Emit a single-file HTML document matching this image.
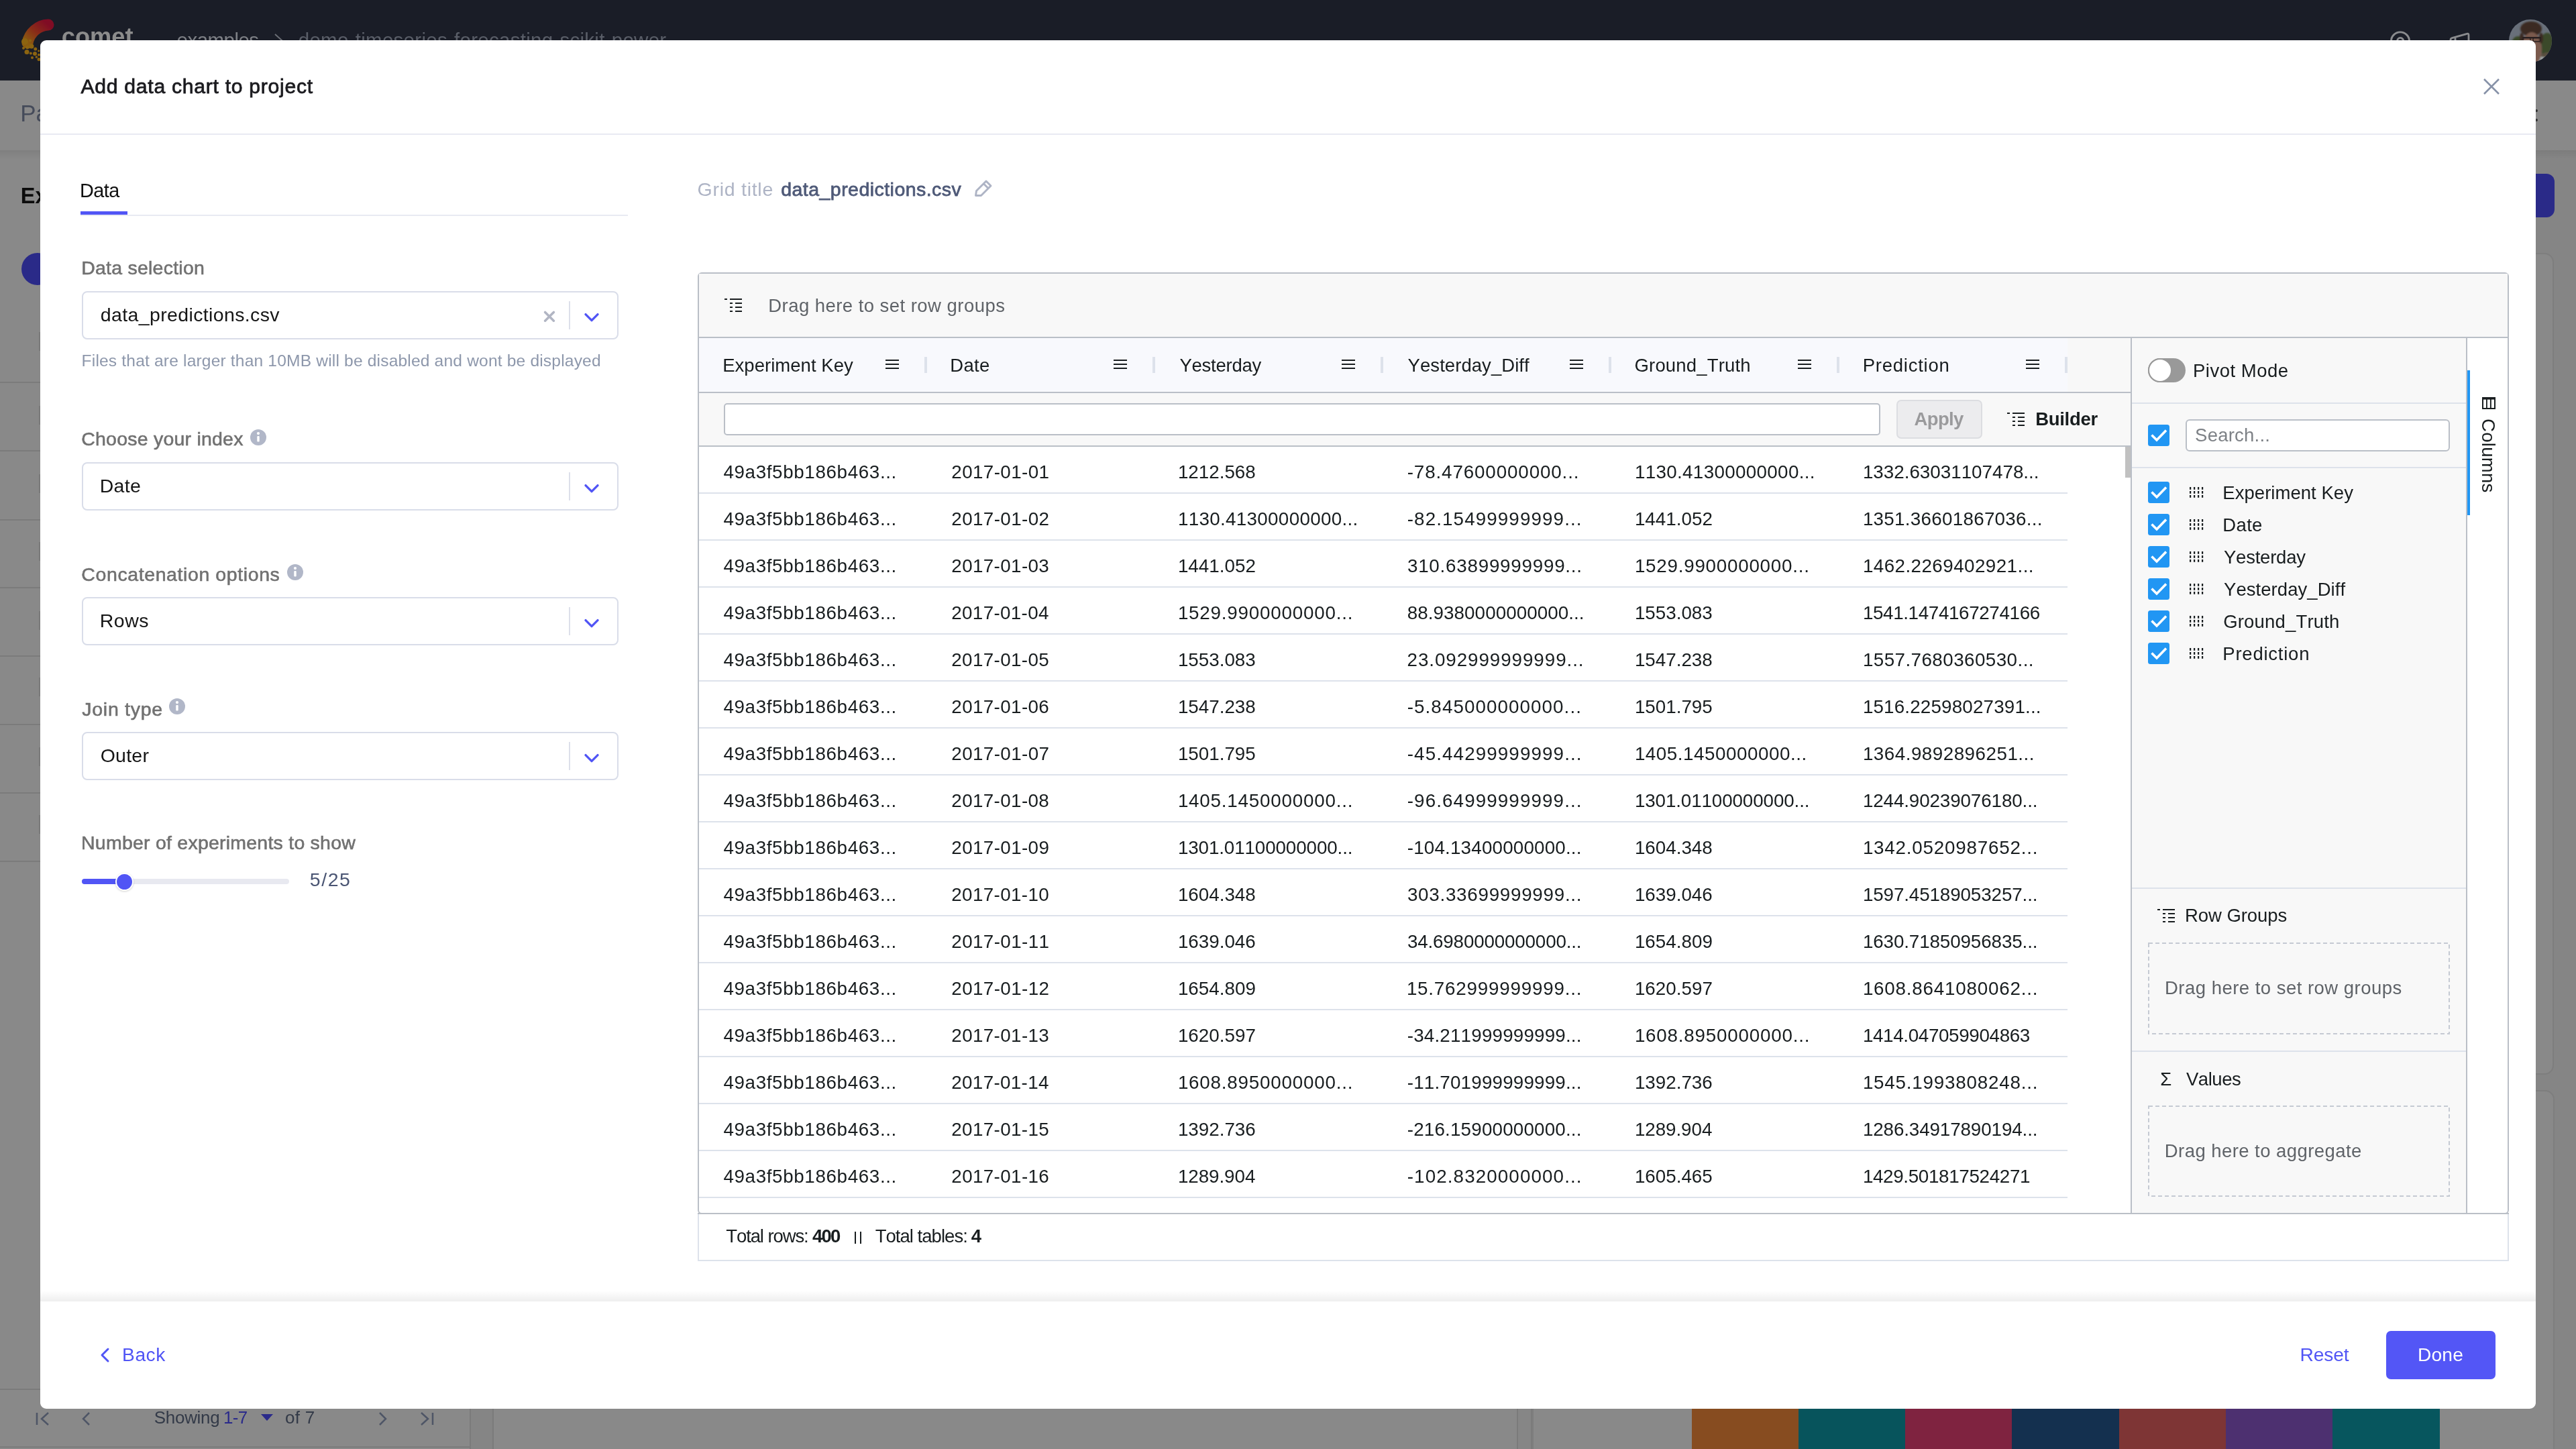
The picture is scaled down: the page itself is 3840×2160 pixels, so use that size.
<!DOCTYPE html><html><head><meta charset="utf-8"><style>
html,body{margin:0;padding:0;}body{width:3840px;height:2160px;overflow:hidden;position:relative;background:#898989;font-family:"Liberation Sans", sans-serif;font-kerning:none;}
.t{position:absolute;white-space:pre;line-height:0;}.r{position:absolute;display:block;box-sizing:border-box;}
</style></head><body><div id="w" style="position:absolute;left:0;top:0;width:3840px;height:2160px;will-change:transform;">
<div class="r" style="left:0px;top:0px;width:3840px;height:120px;background:#1a1d27"></div>
<svg class="r" style="left:0px;top:0px;" width="100" height="100" viewBox="0 0 100 100"><defs><linearGradient id="lg" x1="0" y1="1" x2="1" y2="0"><stop offset="0" stop-color="#8a5c10"/><stop offset="0.5" stop-color="#8a2c18"/><stop offset="1" stop-color="#800c24"/></linearGradient></defs><path d="M41 64 A 33 33 0 0 1 72 37" stroke="url(#lg)" stroke-width="17" fill="none" stroke-linecap="round"/><circle cx="37" cy="62" r="5" fill="#8c6410"/><circle cx="45" cy="60.5" r="2" fill="#8c6410"/><circle cx="47" cy="69" r="3.5" fill="#8c6410"/><circle cx="40.7" cy="70.6" r="2.5" fill="#8c6410"/><circle cx="35" cy="71.7" r="2" fill="#8c6410"/><circle cx="40" cy="77.6" r="3.5" fill="#8c6410"/><circle cx="52.8" cy="73" r="2.5" fill="#8c6410"/><circle cx="45.8" cy="79.5" r="2" fill="#8c6410"/><circle cx="52" cy="80" r="3" fill="#8c6410"/><circle cx="57.8" cy="75.8" r="1.6" fill="#8c6410"/><circle cx="48" cy="86" r="2" fill="#8c6410"/><circle cx="54.3" cy="85" r="1.8" fill="#8c6410"/><circle cx="58" cy="88.5" r="2.5" fill="#8c6410"/><circle cx="58" cy="81.8" r="2" fill="#8c6410"/></svg>
<div class="t" style="left:91.78px;top:55.21px;font-size:36.3px;color:#8c8c8c;font-weight:700;letter-spacing:-0.013px;">comet</div>
<div class="t" style="left:263.55px;top:59.77px;font-size:29.5px;color:#7e8086;font-weight:400;letter-spacing:-0.534px;">examples</div>
<svg class="r" style="left:408px;top:49px;" width="14" height="22" viewBox="0 0 14 22"><path d="M2 2 L12 11 L2 20" stroke="#6a6d74" stroke-width="2" fill="none"/></svg>
<div class="t" style="left:444.76px;top:59.77px;font-size:29.5px;color:#5a5e68;font-weight:400;letter-spacing:0.275px;">demo-timeseries-forecasting-scikit-power</div>
<svg class="r" style="left:3562px;top:45px;" width="34" height="34" viewBox="0 0 34 34"><circle cx="16" cy="16.5" r="13.6" stroke="#8a8b8e" stroke-width="2.9" fill="none"/><path d="M11.5 16 a4.6 4.6 0 1 1 7.5 3.6" stroke="#8a8b8e" stroke-width="2.9" fill="none" stroke-linecap="round"/></svg>
<svg class="r" style="left:3648px;top:46px;" width="40" height="34" viewBox="0 0 40 34"><path d="M5 30 V13.5 Q5 11.3 7.2 10.6 L29.5 4.3 Q32 3.6 32 6.2 V34 M12 9.5 V34" stroke="#8a8b8e" stroke-width="2.8" fill="none" stroke-linejoin="round"/></svg>
<svg class="r" style="left:3740px;top:29px;" width="64" height="64" viewBox="0 0 64 64"><defs><clipPath id="av"><circle cx="32" cy="32" r="32"/></clipPath><filter id="bl"><feGaussianBlur stdDeviation="1.2"/></filter></defs><g clip-path="url(#av)"><rect width="64" height="64" fill="#69707a"/><g filter="url(#bl)"><ellipse cx="14" cy="36" rx="10" ry="11" fill="#3b4a2c"/><ellipse cx="57" cy="38" rx="11" ry="18" fill="#3a4a2a"/><ellipse cx="58" cy="57" rx="12" ry="8" fill="#5a5040"/><path d="M28 64 L40 54 L64 58 L64 64 Z" fill="#9ea3a3"/><ellipse cx="33" cy="14" rx="16" ry="11" fill="#3a2a22"/><ellipse cx="34" cy="44" rx="15" ry="25" fill="#7a5a4e"/><ellipse cx="19" cy="28" rx="3" ry="8" fill="#3a2a22"/><ellipse cx="48" cy="28" rx="3" ry="8" fill="#3a2a22"/></g><rect x="20" y="26" width="28" height="2.5" fill="#2a2020"/><rect x="21" y="27" width="11" height="6" rx="2.5" fill="none" stroke="#2a2020" stroke-width="1.3"/><rect x="36" y="27" width="11" height="6" rx="2.5" fill="none" stroke="#2a2020" stroke-width="1.3"/></g></svg>
<div class="t" style="left:30.13px;top:168.87px;font-size:35px;color:#454b5a;font-weight:400;letter-spacing:0.000px;">Pa</div>
<div class="r" style="left:3780px;top:224px;width:60px;height:1936px;background:#858585"></div>
<div class="r" style="left:0px;top:224px;width:3840px;height:13px;background:linear-gradient(180deg,rgba(0,0,0,0.065),rgba(0,0,0,0))"></div>
<div class="t" style="left:30.83px;top:291.73px;font-size:32.5px;color:#0c0c0c;font-weight:700;letter-spacing:0.000px;">Ex</div>
<div class="r" style="left:32px;top:377px;width:48px;height:48px;border-radius:50%;background:#2a2a88"></div>
<div class="r" style="left:58px;top:495px;width:3px;height:28px;background:#7a7a7a"></div>
<div class="r" style="left:58px;top:605px;width:3px;height:28px;background:#7a7a7a"></div>
<div class="r" style="left:58px;top:707px;width:3px;height:28px;background:#7a7a7a"></div>
<div class="r" style="left:58px;top:808px;width:3px;height:28px;background:#7a7a7a"></div>
<div class="r" style="left:58px;top:911px;width:3px;height:28px;background:#7a7a7a"></div>
<div class="r" style="left:58px;top:1010px;width:3px;height:28px;background:#7a7a7a"></div>
<div class="r" style="left:58px;top:1114px;width:3px;height:28px;background:#7a7a7a"></div>
<div class="r" style="left:58px;top:1215px;width:3px;height:28px;background:#7a7a7a"></div>
<div class="r" style="left:0px;top:569px;width:60px;height:2px;background:#7b7b7b"></div>
<div class="r" style="left:0px;top:671px;width:60px;height:2px;background:#7b7b7b"></div>
<div class="r" style="left:0px;top:774px;width:60px;height:2px;background:#7b7b7b"></div>
<div class="r" style="left:0px;top:875px;width:60px;height:2px;background:#7b7b7b"></div>
<div class="r" style="left:0px;top:977px;width:60px;height:2px;background:#7b7b7b"></div>
<div class="r" style="left:0px;top:1079px;width:60px;height:2px;background:#7b7b7b"></div>
<div class="r" style="left:0px;top:1181px;width:60px;height:2px;background:#7b7b7b"></div>
<div class="r" style="left:0px;top:1283px;width:60px;height:2px;background:#7b7b7b"></div>
<div class="r" style="left:0px;top:2070px;width:700px;height:2px;background:#7b7b7b"></div>
<div class="r" style="left:3700px;top:259px;width:108px;height:65px;border-radius:12px;background:#2a2a88"></div>
<div class="r" style="left:2290px;top:377px;width:1517px;height:1225px;border-radius:14px;border:2px solid #7e7e7e;background:#898989"></div>
<div class="r" style="left:2284px;top:1625px;width:1524px;height:900px;border-radius:14px;border:2px solid #7e7e7e;background:#898989"></div>
<div class="r" style="left:3779px;top:163px;width:4px;height:4px;background:#333;border-radius:50%"></div>
<div class="r" style="left:3779px;top:177px;width:4px;height:4px;background:#333;border-radius:50%"></div>
<div class="t" style="left:229.82px;top:2112.99px;font-size:26px;color:#333a48;font-weight:400;letter-spacing:-0.313px;">Showing</div>
<div class="t" style="left:333.02px;top:2112.99px;font-size:26px;color:#2a2a8a;font-weight:400;letter-spacing:-0.645px;">1-7</div>
<svg class="r" style="left:389px;top:2108px;" width="18" height="12" viewBox="0 0 18 12"><path d="M0 0 L18 0 L9 10 Z" fill="#2a2a8a"/></svg>
<div class="t" style="left:424.91px;top:2112.99px;font-size:26px;color:#333a48;font-weight:400;letter-spacing:0.344px;">of 7</div>
<svg class="r" style="left:52px;top:2104px;" width="24" height="22" viewBox="0 0 24 22"><path d="M3 2 V20 M20 2 L10 11 L20 20" stroke="#4e5566" stroke-width="2.5" fill="none"/></svg>
<svg class="r" style="left:120px;top:2104px;" width="16" height="22" viewBox="0 0 16 22"><path d="M13 2 L4 11 L13 20" stroke="#4e5566" stroke-width="2.5" fill="none"/></svg>
<svg class="r" style="left:563px;top:2104px;" width="16" height="22" viewBox="0 0 16 22"><path d="M3 2 L12 11 L3 20" stroke="#4e5566" stroke-width="2.5" fill="none"/></svg>
<svg class="r" style="left:624px;top:2104px;" width="24" height="22" viewBox="0 0 24 22"><path d="M4 2 L14 11 L4 20 M21 2 V20" stroke="#4e5566" stroke-width="2.5" fill="none"/></svg>
<div class="r" style="left:700px;top:2100px;width:36px;height:60px;background:#858585"></div>
<div class="r" style="left:700px;top:2100px;width:2px;height:60px;background:#7b7b7b"></div>
<div class="r" style="left:734px;top:2100px;width:2px;height:60px;background:#7b7b7b"></div>
<div class="r" style="left:0px;top:2156px;width:700px;height:2px;background:#7b7b7b"></div>
<div class="r" style="left:2261px;top:2100px;width:23px;height:60px;background:#868686"></div>
<div class="r" style="left:2261px;top:2100px;width:2px;height:60px;background:#7b7b7b"></div>
<div class="r" style="left:2282px;top:2100px;width:2px;height:60px;background:#7b7b7b"></div>
<div class="r" style="left:2522px;top:2100px;width:160px;height:60px;background:#874c20"></div>
<div class="r" style="left:2681px;top:2100px;width:160px;height:60px;background:#07545c"></div>
<div class="r" style="left:2840px;top:2100px;width:160px;height:60px;background:#7f2340"></div>
<div class="r" style="left:2999px;top:2100px;width:160px;height:60px;background:#14304f"></div>
<div class="r" style="left:3159px;top:2100px;width:160px;height:60px;background:#7e3535"></div>
<div class="r" style="left:3318px;top:2100px;width:160px;height:60px;background:#4d3070"></div>
<div class="r" style="left:3477px;top:2100px;width:160px;height:60px;background:#07565e"></div>
<div class="r" style="left:60px;top:60px;width:3720px;height:2040px;background:#ffffff;border-radius:9px"></div>
<div class="t" style="left:120.44px;top:129.03px;font-size:30.2px;color:#1b1b1f;font-weight:400;letter-spacing:0.697px;-webkit-text-stroke:0.8px #1b1b1f;">Add data chart to project</div>
<svg class="r" style="left:3700px;top:115px;" width="28" height="28" viewBox="0 0 28 28"><path d="M3 3 L25 25 M25 3 L3 25" stroke="#8792a8" stroke-width="2.6" fill="none"/></svg>
<div class="r" style="left:60px;top:199px;width:3720px;height:2px;background:#e8eaf2"></div>
<div class="t" style="left:119.04px;top:284.42px;font-size:28.8px;color:#111111;font-weight:400;letter-spacing:-0.491px;">Data</div>
<div class="r" style="left:120px;top:320px;width:816px;height:2px;background:#e8eaf2"></div>
<div class="r" style="left:120px;top:315px;width:70px;height:5px;background:#5155f5"></div>
<div class="t" style="left:121.16px;top:399.32px;font-size:28.5px;color:#717171;font-weight:400;letter-spacing:0.237px;-webkit-text-stroke:0.6px #717171;">Data selection</div>
<div class="r" style="left:122px;top:434px;width:800px;height:72px;border:2px solid #d9dde9;border-radius:8px;background:#fff"></div>
<div class="t" style="left:149.80px;top:469.32px;font-size:28.5px;color:#151515;font-weight:400;letter-spacing:0.367px;">data_predictions.csv</div>
<div class="r" style="left:848px;top:449px;width:2px;height:42px;background:#dde0ea"></div>
<svg class="r" style="left:868px;top:463px;" width="28" height="18" viewBox="0 0 28 18"><path d="M5 5.6 L14 14.6 L23 5.6" stroke="#5155f5" stroke-width="3.4" fill="none" stroke-linecap="round" stroke-linejoin="round"/></svg>
<svg class="r" style="left:806px;top:459px;" width="26" height="26" viewBox="0 0 26 26"><path d="M6.6 6.4 L19.4 19.2 M19.4 6.4 L6.6 19.2" stroke="#b1b5c3" stroke-width="3.5" fill="none" stroke-linecap="round"/></svg>
<div class="t" style="left:121.58px;top:538.47px;font-size:24.6px;color:#8d97ab;font-weight:400;letter-spacing:0.162px;">Files that are larger than 10MB will be disabled and wont be displayed</div>
<div class="t" style="left:121.25px;top:654.12px;font-size:28.5px;color:#717171;font-weight:400;letter-spacing:0.219px;-webkit-text-stroke:0.6px #717171;">Choose your index</div>
<svg class="r" style="left:373px;top:640px;" width="24" height="24" viewBox="0 0 24 24"><circle cx="12" cy="12" r="12" fill="#b1b7c8"/><circle cx="12" cy="6.1" r="2.1" fill="#fff"/><rect x="10.3" y="10" width="3.4" height="8.5" rx="1.2" fill="#fff"/></svg>
<div class="r" style="left:122px;top:689px;width:800px;height:72px;border:2px solid #d9dde9;border-radius:8px;background:#fff"></div>
<div class="t" style="left:148.66px;top:724.32px;font-size:28.5px;color:#151515;font-weight:400;letter-spacing:0.301px;">Date</div>
<div class="r" style="left:848px;top:704px;width:2px;height:42px;background:#dde0ea"></div>
<svg class="r" style="left:868px;top:718px;" width="28" height="18" viewBox="0 0 28 18"><path d="M5 5.6 L14 14.6 L23 5.6" stroke="#5155f5" stroke-width="3.4" fill="none" stroke-linecap="round" stroke-linejoin="round"/></svg>
<div class="t" style="left:121.35px;top:856.42px;font-size:28.5px;color:#717171;font-weight:400;letter-spacing:0.593px;-webkit-text-stroke:0.6px #717171;">Concatenation options</div>
<svg class="r" style="left:428px;top:841px;" width="24" height="24" viewBox="0 0 24 24"><circle cx="12" cy="12" r="12" fill="#b1b7c8"/><circle cx="12" cy="6.1" r="2.1" fill="#fff"/><rect x="10.3" y="10" width="3.4" height="8.5" rx="1.2" fill="#fff"/></svg>
<div class="r" style="left:122px;top:890px;width:800px;height:72px;border:2px solid #d9dde9;border-radius:8px;background:#fff"></div>
<div class="t" style="left:148.66px;top:925.32px;font-size:28.5px;color:#151515;font-weight:400;letter-spacing:0.535px;">Rows</div>
<div class="r" style="left:848px;top:905px;width:2px;height:42px;background:#dde0ea"></div>
<svg class="r" style="left:868px;top:919px;" width="28" height="18" viewBox="0 0 28 18"><path d="M5 5.6 L14 14.6 L23 5.6" stroke="#5155f5" stroke-width="3.4" fill="none" stroke-linecap="round" stroke-linejoin="round"/></svg>
<div class="t" style="left:122.35px;top:1057.12px;font-size:28.5px;color:#717171;font-weight:400;letter-spacing:0.705px;-webkit-text-stroke:0.6px #717171;">Join type</div>
<svg class="r" style="left:252px;top:1041px;" width="24" height="24" viewBox="0 0 24 24"><circle cx="12" cy="12" r="12" fill="#b1b7c8"/><circle cx="12" cy="6.1" r="2.1" fill="#fff"/><rect x="10.3" y="10" width="3.4" height="8.5" rx="1.2" fill="#fff"/></svg>
<div class="r" style="left:122px;top:1091px;width:800px;height:72px;border:2px solid #d9dde9;border-radius:8px;background:#fff"></div>
<div class="t" style="left:149.65px;top:1126.32px;font-size:28.5px;color:#151515;font-weight:400;letter-spacing:0.261px;">Outer</div>
<div class="r" style="left:848px;top:1106px;width:2px;height:42px;background:#dde0ea"></div>
<svg class="r" style="left:868px;top:1120px;" width="28" height="18" viewBox="0 0 28 18"><path d="M5 5.6 L14 14.6 L23 5.6" stroke="#5155f5" stroke-width="3.4" fill="none" stroke-linecap="round" stroke-linejoin="round"/></svg>
<div class="t" style="left:121.06px;top:1256.12px;font-size:28.5px;color:#717171;font-weight:400;letter-spacing:0.230px;-webkit-text-stroke:0.6px #717171;">Number of experiments to show</div>
<div class="r" style="left:122px;top:1310px;width:309px;height:8px;background:#e8e9f0;border-radius:4px"></div>
<div class="r" style="left:122px;top:1310px;width:64px;height:8px;background:#5155f5;border-radius:4px"></div>
<div class="r" style="left:172px;top:1301px;width:27px;height:27px;border-radius:50%;background:#5155f5;border:2px solid #fff;box-shadow:0 1px 3px rgba(0,0,0,0.18)"></div>
<div class="t" style="left:461.86px;top:1311.12px;font-size:28.5px;color:#4a5573;font-weight:400;letter-spacing:1.523px;">5/25</div>
<div class="t" style="left:1039.57px;top:281.72px;font-size:28.5px;color:#aeb4c5;font-weight:400;letter-spacing:0.732px;">Grid title</div>
<div class="t" style="left:1164.20px;top:281.72px;font-size:28.5px;color:#4f5a78;font-weight:400;letter-spacing:0.462px;-webkit-text-stroke:0.8px #4f5a78;">data_predictions.csv</div>
<svg class="r" style="left:1450px;top:266px;" width="32" height="32" viewBox="0 0 32 32"><path d="M4.5 25.5 L5.5 18.5 L20 4 L27 11 L12.5 25.5 Z M16.2 7.8 L23.2 14.8" stroke="#aeb4c5" stroke-width="2.9" fill="none" stroke-linejoin="round"/></svg>
<div class="r" style="left:1040px;top:406px;width:2700px;height:1404px;border:2px solid #babfc7;border-radius:6px;background:#fff;overflow:hidden"></div>
<div class="r" style="left:1042px;top:408px;width:2696px;height:94px;background:#f8f8f8"></div>
<div class="r" style="left:1042px;top:502px;width:2696px;height:2px;background:#babfc7"></div>
<svg class="r" style="left:1078px;top:443px;" width="30" height="24" viewBox="0 0 30 24"><rect x="2" y="2" width="4" height="2" fill="#181d1f"/><rect x="10" y="2" width="18" height="2" fill="#181d1f"/><rect x="10" y="8" width="4" height="2" fill="#181d1f"/><rect x="18" y="8" width="10" height="2" fill="#181d1f"/><rect x="10" y="14" width="4" height="2" fill="#181d1f"/><rect x="18" y="14" width="10" height="2" fill="#181d1f"/><rect x="10" y="20" width="4" height="2" fill="#181d1f"/><rect x="18" y="20" width="10" height="2" fill="#181d1f"/></svg>
<div class="t" style="left:1145.24px;top:455.67px;font-size:27.5px;color:#5f6368;font-weight:400;letter-spacing:0.453px;">Drag here to set row groups</div>
<div class="r" style="left:1042px;top:504px;width:2040px;height:80px;background:#f8f9fd"></div>
<div class="r" style="left:3082px;top:504px;width:94px;height:80px;background:#f8f8f8"></div>
<div class="r" style="left:1042px;top:584px;width:2134px;height:2px;background:#babfc7"></div>
<div class="t" style="left:1077.14px;top:544.67px;font-size:27.5px;color:#181d1f;font-weight:400;letter-spacing:0.038px;">Experiment Key</div>
<div class="r" style="left:1320px;top:536px;width:20px;height:2px;background:#181d1f"></div>
<div class="r" style="left:1320px;top:542px;width:20px;height:2px;background:#181d1f"></div>
<div class="r" style="left:1320px;top:548px;width:20px;height:2px;background:#181d1f"></div>
<div class="r" style="left:1378px;top:532px;width:4px;height:24px;background:#dde2eb"></div>
<div class="t" style="left:1416.24px;top:544.67px;font-size:27.5px;color:#181d1f;font-weight:400;letter-spacing:0.330px;">Date</div>
<div class="r" style="left:1660px;top:536px;width:20px;height:2px;background:#181d1f"></div>
<div class="r" style="left:1660px;top:542px;width:20px;height:2px;background:#181d1f"></div>
<div class="r" style="left:1660px;top:548px;width:20px;height:2px;background:#181d1f"></div>
<div class="r" style="left:1718px;top:532px;width:4px;height:24px;background:#dde2eb"></div>
<div class="t" style="left:1758.40px;top:544.67px;font-size:27.5px;color:#181d1f;font-weight:400;letter-spacing:-0.232px;">Yesterday</div>
<div class="r" style="left:2000px;top:536px;width:20px;height:2px;background:#181d1f"></div>
<div class="r" style="left:2000px;top:542px;width:20px;height:2px;background:#181d1f"></div>
<div class="r" style="left:2000px;top:548px;width:20px;height:2px;background:#181d1f"></div>
<div class="r" style="left:2058px;top:532px;width:4px;height:24px;background:#dde2eb"></div>
<div class="t" style="left:2098.60px;top:544.67px;font-size:27.5px;color:#181d1f;font-weight:400;letter-spacing:0.054px;">Yesterday_Diff</div>
<div class="r" style="left:2340px;top:536px;width:20px;height:2px;background:#181d1f"></div>
<div class="r" style="left:2340px;top:542px;width:20px;height:2px;background:#181d1f"></div>
<div class="r" style="left:2340px;top:548px;width:20px;height:2px;background:#181d1f"></div>
<div class="r" style="left:2398px;top:532px;width:4px;height:24px;background:#dde2eb"></div>
<div class="t" style="left:2436.52px;top:544.67px;font-size:27.5px;color:#181d1f;font-weight:400;letter-spacing:0.170px;">Ground_Truth</div>
<div class="r" style="left:2680px;top:536px;width:20px;height:2px;background:#181d1f"></div>
<div class="r" style="left:2680px;top:542px;width:20px;height:2px;background:#181d1f"></div>
<div class="r" style="left:2680px;top:548px;width:20px;height:2px;background:#181d1f"></div>
<div class="r" style="left:2738px;top:532px;width:4px;height:24px;background:#dde2eb"></div>
<div class="t" style="left:2776.64px;top:544.67px;font-size:27.5px;color:#181d1f;font-weight:400;letter-spacing:0.762px;">Prediction</div>
<div class="r" style="left:3020px;top:536px;width:20px;height:2px;background:#181d1f"></div>
<div class="r" style="left:3020px;top:542px;width:20px;height:2px;background:#181d1f"></div>
<div class="r" style="left:3020px;top:548px;width:20px;height:2px;background:#181d1f"></div>
<div class="r" style="left:3078px;top:532px;width:4px;height:24px;background:#dde2eb"></div>
<div class="r" style="left:1042px;top:586px;width:2134px;height:78px;background:#f8f8f8"></div>
<div class="r" style="left:1042px;top:664px;width:2134px;height:2px;background:#babfc7"></div>
<div class="r" style="left:1079px;top:601px;width:1724px;height:48px;border:2px solid #babfc7;border-radius:5px;background:#fff"></div>
<div class="r" style="left:2827px;top:596px;width:128px;height:58px;border:2px solid #dcdde1;border-radius:7px;background:#ececee"></div>
<div class="t" style="left:2853.52px;top:625.47px;font-size:27.5px;color:#9a9a9c;font-weight:700;letter-spacing:-0.639px;">Apply</div>
<svg class="r" style="left:2990px;top:613px;" width="30" height="24" viewBox="0 0 30 24"><rect x="2" y="2" width="4" height="2" fill="#181d1f"/><rect x="10" y="2" width="18" height="2" fill="#181d1f"/><rect x="10" y="8" width="4" height="2" fill="#181d1f"/><rect x="18" y="8" width="10" height="2" fill="#181d1f"/><rect x="10" y="14" width="4" height="2" fill="#181d1f"/><rect x="18" y="14" width="10" height="2" fill="#181d1f"/><rect x="10" y="20" width="4" height="2" fill="#181d1f"/><rect x="18" y="20" width="10" height="2" fill="#181d1f"/></svg>
<div class="t" style="left:3034.16px;top:625.47px;font-size:27.5px;color:#181d1f;font-weight:700;letter-spacing:-0.279px;">Builder</div>
<div class="t" style="left:1078.46px;top:703.66px;font-size:27.8px;color:#181d1f;font-weight:400;letter-spacing:0.619px;">49a3f5bb186b463...</div>
<div class="t" style="left:1418.30px;top:703.66px;font-size:27.8px;color:#181d1f;font-weight:400;letter-spacing:0.395px;">2017-01-01</div>
<div class="t" style="left:1755.88px;top:703.66px;font-size:27.8px;color:#181d1f;font-weight:400;letter-spacing:-0.004px;">1212.568</div>
<div class="t" style="left:2097.76px;top:703.66px;font-size:27.8px;color:#181d1f;font-weight:400;letter-spacing:0.860px;">-78.47600000000...</div>
<div class="t" style="left:2436.88px;top:703.66px;font-size:27.8px;color:#181d1f;font-weight:400;letter-spacing:0.325px;">1130.41300000000...</div>
<div class="t" style="left:2776.88px;top:703.66px;font-size:27.8px;color:#181d1f;font-weight:400;letter-spacing:-0.009px;">1332.63031107478...</div>
<div class="r" style="left:1042px;top:734px;width:2040px;height:2px;background:#dde2eb"></div>
<div class="t" style="left:1078.46px;top:773.66px;font-size:27.8px;color:#181d1f;font-weight:400;letter-spacing:0.619px;">49a3f5bb186b463...</div>
<div class="t" style="left:1418.30px;top:773.66px;font-size:27.8px;color:#181d1f;font-weight:400;letter-spacing:0.390px;">2017-01-02</div>
<div class="t" style="left:1755.88px;top:773.66px;font-size:27.8px;color:#181d1f;font-weight:400;letter-spacing:0.314px;">1130.41300000000...</div>
<div class="t" style="left:2097.76px;top:773.66px;font-size:27.8px;color:#181d1f;font-weight:400;letter-spacing:1.096px;">-82.15499999999...</div>
<div class="t" style="left:2436.88px;top:773.66px;font-size:27.8px;color:#181d1f;font-weight:400;letter-spacing:0.021px;">1441.052</div>
<div class="t" style="left:2776.88px;top:773.66px;font-size:27.8px;color:#181d1f;font-weight:400;letter-spacing:0.269px;">1351.36601867036...</div>
<div class="r" style="left:1042px;top:804px;width:2040px;height:2px;background:#dde2eb"></div>
<div class="t" style="left:1078.46px;top:843.66px;font-size:27.8px;color:#181d1f;font-weight:400;letter-spacing:0.619px;">49a3f5bb186b463...</div>
<div class="t" style="left:1418.30px;top:843.66px;font-size:27.8px;color:#181d1f;font-weight:400;letter-spacing:0.371px;">2017-01-03</div>
<div class="t" style="left:1755.88px;top:843.66px;font-size:27.8px;color:#181d1f;font-weight:400;letter-spacing:0.021px;">1441.052</div>
<div class="t" style="left:2097.94px;top:843.66px;font-size:27.8px;color:#181d1f;font-weight:400;letter-spacing:0.750px;">310.63899999999...</div>
<div class="t" style="left:2436.88px;top:843.66px;font-size:27.8px;color:#181d1f;font-weight:400;letter-spacing:0.747px;">1529.9900000000...</div>
<div class="t" style="left:2776.88px;top:843.66px;font-size:27.8px;color:#181d1f;font-weight:400;letter-spacing:0.430px;">1462.2269402921...</div>
<div class="r" style="left:1042px;top:874px;width:2040px;height:2px;background:#dde2eb"></div>
<div class="t" style="left:1078.46px;top:913.66px;font-size:27.8px;color:#181d1f;font-weight:400;letter-spacing:0.619px;">49a3f5bb186b463...</div>
<div class="t" style="left:1418.30px;top:913.66px;font-size:27.8px;color:#181d1f;font-weight:400;letter-spacing:0.325px;">2017-01-04</div>
<div class="t" style="left:1755.88px;top:913.66px;font-size:27.8px;color:#181d1f;font-weight:400;letter-spacing:0.783px;">1529.9900000000...</div>
<div class="t" style="left:2097.79px;top:913.66px;font-size:27.8px;color:#181d1f;font-weight:400;letter-spacing:0.052px;">88.9380000000000...</div>
<div class="t" style="left:2436.88px;top:913.66px;font-size:27.8px;color:#181d1f;font-weight:400;letter-spacing:-0.005px;">1553.083</div>
<div class="t" style="left:2776.88px;top:913.66px;font-size:27.8px;color:#181d1f;font-weight:400;letter-spacing:-0.366px;">1541.1474167274166</div>
<div class="r" style="left:1042px;top:944px;width:2040px;height:2px;background:#dde2eb"></div>
<div class="t" style="left:1078.46px;top:983.66px;font-size:27.8px;color:#181d1f;font-weight:400;letter-spacing:0.619px;">49a3f5bb186b463...</div>
<div class="t" style="left:1418.30px;top:983.66px;font-size:27.8px;color:#181d1f;font-weight:400;letter-spacing:0.365px;">2017-01-05</div>
<div class="t" style="left:1755.88px;top:983.66px;font-size:27.8px;color:#181d1f;font-weight:400;letter-spacing:-0.005px;">1553.083</div>
<div class="t" style="left:2097.60px;top:983.66px;font-size:27.8px;color:#181d1f;font-weight:400;letter-spacing:0.917px;">23.092999999999...</div>
<div class="t" style="left:2436.88px;top:983.66px;font-size:27.8px;color:#181d1f;font-weight:400;letter-spacing:-0.006px;">1547.238</div>
<div class="t" style="left:2776.88px;top:983.66px;font-size:27.8px;color:#181d1f;font-weight:400;letter-spacing:0.430px;">1557.7680360530...</div>
<div class="r" style="left:1042px;top:1014px;width:2040px;height:2px;background:#dde2eb"></div>
<div class="t" style="left:1078.46px;top:1053.66px;font-size:27.8px;color:#181d1f;font-weight:400;letter-spacing:0.619px;">49a3f5bb186b463...</div>
<div class="t" style="left:1418.30px;top:1053.66px;font-size:27.8px;color:#181d1f;font-weight:400;letter-spacing:0.371px;">2017-01-06</div>
<div class="t" style="left:1755.88px;top:1053.66px;font-size:27.8px;color:#181d1f;font-weight:400;letter-spacing:-0.006px;">1547.238</div>
<div class="t" style="left:2097.76px;top:1053.66px;font-size:27.8px;color:#181d1f;font-weight:400;letter-spacing:1.060px;">-5.845000000000...</div>
<div class="t" style="left:2436.88px;top:1053.66px;font-size:27.8px;color:#181d1f;font-weight:400;letter-spacing:-0.012px;">1501.795</div>
<div class="t" style="left:2776.88px;top:1053.66px;font-size:27.8px;color:#181d1f;font-weight:400;letter-spacing:0.158px;">1516.22598027391...</div>
<div class="r" style="left:1042px;top:1084px;width:2040px;height:2px;background:#dde2eb"></div>
<div class="t" style="left:1078.46px;top:1123.66px;font-size:27.8px;color:#181d1f;font-weight:400;letter-spacing:0.619px;">49a3f5bb186b463...</div>
<div class="t" style="left:1418.30px;top:1123.66px;font-size:27.8px;color:#181d1f;font-weight:400;letter-spacing:0.390px;">2017-01-07</div>
<div class="t" style="left:1755.88px;top:1123.66px;font-size:27.8px;color:#181d1f;font-weight:400;letter-spacing:-0.012px;">1501.795</div>
<div class="t" style="left:2097.76px;top:1123.66px;font-size:27.8px;color:#181d1f;font-weight:400;letter-spacing:1.096px;">-45.44299999999...</div>
<div class="t" style="left:2436.88px;top:1123.66px;font-size:27.8px;color:#181d1f;font-weight:400;letter-spacing:0.524px;">1405.1450000000...</div>
<div class="t" style="left:2776.88px;top:1123.66px;font-size:27.8px;color:#181d1f;font-weight:400;letter-spacing:0.489px;">1364.9892896251...</div>
<div class="r" style="left:1042px;top:1154px;width:2040px;height:2px;background:#dde2eb"></div>
<div class="t" style="left:1078.46px;top:1193.66px;font-size:27.8px;color:#181d1f;font-weight:400;letter-spacing:0.619px;">49a3f5bb186b463...</div>
<div class="t" style="left:1418.30px;top:1193.66px;font-size:27.8px;color:#181d1f;font-weight:400;letter-spacing:0.369px;">2017-01-08</div>
<div class="t" style="left:1755.88px;top:1193.66px;font-size:27.8px;color:#181d1f;font-weight:400;letter-spacing:0.783px;">1405.1450000000...</div>
<div class="t" style="left:2097.76px;top:1193.66px;font-size:27.8px;color:#181d1f;font-weight:400;letter-spacing:1.096px;">-96.64999999999...</div>
<div class="t" style="left:2436.88px;top:1193.66px;font-size:27.8px;color:#181d1f;font-weight:400;letter-spacing:-0.120px;">1301.01100000000...</div>
<div class="t" style="left:2776.88px;top:1193.66px;font-size:27.8px;color:#181d1f;font-weight:400;letter-spacing:-0.120px;">1244.90239076180...</div>
<div class="r" style="left:1042px;top:1224px;width:2040px;height:2px;background:#dde2eb"></div>
<div class="t" style="left:1078.46px;top:1263.66px;font-size:27.8px;color:#181d1f;font-weight:400;letter-spacing:0.619px;">49a3f5bb186b463...</div>
<div class="t" style="left:1418.30px;top:1263.66px;font-size:27.8px;color:#181d1f;font-weight:400;letter-spacing:0.381px;">2017-01-09</div>
<div class="t" style="left:1755.88px;top:1263.66px;font-size:27.8px;color:#181d1f;font-weight:400;letter-spacing:-0.120px;">1301.01100000000...</div>
<div class="t" style="left:2097.76px;top:1263.66px;font-size:27.8px;color:#181d1f;font-weight:400;letter-spacing:0.176px;">-104.13400000000...</div>
<div class="t" style="left:2436.88px;top:1263.66px;font-size:27.8px;color:#181d1f;font-weight:400;letter-spacing:-0.006px;">1604.348</div>
<div class="t" style="left:2776.88px;top:1263.66px;font-size:27.8px;color:#181d1f;font-weight:400;letter-spacing:0.783px;">1342.0520987652...</div>
<div class="r" style="left:1042px;top:1294px;width:2040px;height:2px;background:#dde2eb"></div>
<div class="t" style="left:1078.46px;top:1333.66px;font-size:27.8px;color:#181d1f;font-weight:400;letter-spacing:0.619px;">49a3f5bb186b463...</div>
<div class="t" style="left:1418.30px;top:1333.66px;font-size:27.8px;color:#181d1f;font-weight:400;letter-spacing:0.356px;">2017-01-10</div>
<div class="t" style="left:1755.88px;top:1333.66px;font-size:27.8px;color:#181d1f;font-weight:400;letter-spacing:-0.006px;">1604.348</div>
<div class="t" style="left:2097.94px;top:1333.66px;font-size:27.8px;color:#181d1f;font-weight:400;letter-spacing:0.720px;">303.33699999999...</div>
<div class="t" style="left:2436.88px;top:1333.66px;font-size:27.8px;color:#181d1f;font-weight:400;letter-spacing:-0.005px;">1639.046</div>
<div class="t" style="left:2776.88px;top:1333.66px;font-size:27.8px;color:#181d1f;font-weight:400;letter-spacing:-0.120px;">1597.45189053257...</div>
<div class="r" style="left:1042px;top:1364px;width:2040px;height:2px;background:#dde2eb"></div>
<div class="t" style="left:1078.46px;top:1403.66px;font-size:27.8px;color:#181d1f;font-weight:400;letter-spacing:0.619px;">49a3f5bb186b463...</div>
<div class="t" style="left:1418.30px;top:1403.66px;font-size:27.8px;color:#181d1f;font-weight:400;letter-spacing:0.386px;">2017-01-11</div>
<div class="t" style="left:1755.88px;top:1403.66px;font-size:27.8px;color:#181d1f;font-weight:400;letter-spacing:-0.005px;">1639.046</div>
<div class="t" style="left:2097.94px;top:1403.66px;font-size:27.8px;color:#181d1f;font-weight:400;letter-spacing:-0.179px;">34.6980000000000...</div>
<div class="t" style="left:2436.88px;top:1403.66px;font-size:27.8px;color:#181d1f;font-weight:400;letter-spacing:0.009px;">1654.809</div>
<div class="t" style="left:2776.88px;top:1403.66px;font-size:27.8px;color:#181d1f;font-weight:400;letter-spacing:-0.120px;">1630.71850956835...</div>
<div class="r" style="left:1042px;top:1434px;width:2040px;height:2px;background:#dde2eb"></div>
<div class="t" style="left:1078.46px;top:1473.66px;font-size:27.8px;color:#181d1f;font-weight:400;letter-spacing:0.619px;">49a3f5bb186b463...</div>
<div class="t" style="left:1418.30px;top:1473.66px;font-size:27.8px;color:#181d1f;font-weight:400;letter-spacing:0.390px;">2017-01-12</div>
<div class="t" style="left:1755.88px;top:1473.66px;font-size:27.8px;color:#181d1f;font-weight:400;letter-spacing:0.009px;">1654.809</div>
<div class="t" style="left:2096.88px;top:1473.66px;font-size:27.8px;color:#181d1f;font-weight:400;letter-spacing:0.783px;">15.762999999999...</div>
<div class="t" style="left:2436.88px;top:1473.66px;font-size:27.8px;color:#181d1f;font-weight:400;letter-spacing:0.021px;">1620.597</div>
<div class="t" style="left:2776.88px;top:1473.66px;font-size:27.8px;color:#181d1f;font-weight:400;letter-spacing:0.783px;">1608.8641080062...</div>
<div class="r" style="left:1042px;top:1504px;width:2040px;height:2px;background:#dde2eb"></div>
<div class="t" style="left:1078.46px;top:1543.66px;font-size:27.8px;color:#181d1f;font-weight:400;letter-spacing:0.619px;">49a3f5bb186b463...</div>
<div class="t" style="left:1418.30px;top:1543.66px;font-size:27.8px;color:#181d1f;font-weight:400;letter-spacing:0.371px;">2017-01-13</div>
<div class="t" style="left:1755.88px;top:1543.66px;font-size:27.8px;color:#181d1f;font-weight:400;letter-spacing:0.021px;">1620.597</div>
<div class="t" style="left:2097.76px;top:1543.66px;font-size:27.8px;color:#181d1f;font-weight:400;letter-spacing:0.176px;">-34.211999999999...</div>
<div class="t" style="left:2436.88px;top:1543.66px;font-size:27.8px;color:#181d1f;font-weight:400;letter-spacing:0.783px;">1608.8950000000...</div>
<div class="t" style="left:2776.88px;top:1543.66px;font-size:27.8px;color:#181d1f;font-weight:400;letter-spacing:-0.351px;">1414.047059904863</div>
<div class="r" style="left:1042px;top:1574px;width:2040px;height:2px;background:#dde2eb"></div>
<div class="t" style="left:1078.46px;top:1613.66px;font-size:27.8px;color:#181d1f;font-weight:400;letter-spacing:0.619px;">49a3f5bb186b463...</div>
<div class="t" style="left:1418.30px;top:1613.66px;font-size:27.8px;color:#181d1f;font-weight:400;letter-spacing:0.325px;">2017-01-14</div>
<div class="t" style="left:1755.88px;top:1613.66px;font-size:27.8px;color:#181d1f;font-weight:400;letter-spacing:0.783px;">1608.8950000000...</div>
<div class="t" style="left:2097.76px;top:1613.66px;font-size:27.8px;color:#181d1f;font-weight:400;letter-spacing:0.176px;">-11.701999999999...</div>
<div class="t" style="left:2436.88px;top:1613.66px;font-size:27.8px;color:#181d1f;font-weight:400;letter-spacing:-0.005px;">1392.736</div>
<div class="t" style="left:2776.88px;top:1613.66px;font-size:27.8px;color:#181d1f;font-weight:400;letter-spacing:0.783px;">1545.1993808248...</div>
<div class="r" style="left:1042px;top:1644px;width:2040px;height:2px;background:#dde2eb"></div>
<div class="t" style="left:1078.46px;top:1683.66px;font-size:27.8px;color:#181d1f;font-weight:400;letter-spacing:0.619px;">49a3f5bb186b463...</div>
<div class="t" style="left:1418.30px;top:1683.66px;font-size:27.8px;color:#181d1f;font-weight:400;letter-spacing:0.365px;">2017-01-15</div>
<div class="t" style="left:1755.88px;top:1683.66px;font-size:27.8px;color:#181d1f;font-weight:400;letter-spacing:-0.005px;">1392.736</div>
<div class="t" style="left:2097.76px;top:1683.66px;font-size:27.8px;color:#181d1f;font-weight:400;letter-spacing:0.176px;">-216.15900000000...</div>
<div class="t" style="left:2436.88px;top:1683.66px;font-size:27.8px;color:#181d1f;font-weight:400;letter-spacing:-0.063px;">1289.904</div>
<div class="t" style="left:2776.88px;top:1683.66px;font-size:27.8px;color:#181d1f;font-weight:400;letter-spacing:-0.120px;">1286.34917890194...</div>
<div class="r" style="left:1042px;top:1714px;width:2040px;height:2px;background:#dde2eb"></div>
<div class="t" style="left:1078.46px;top:1753.66px;font-size:27.8px;color:#181d1f;font-weight:400;letter-spacing:0.619px;">49a3f5bb186b463...</div>
<div class="t" style="left:1418.30px;top:1753.66px;font-size:27.8px;color:#181d1f;font-weight:400;letter-spacing:0.371px;">2017-01-16</div>
<div class="t" style="left:1755.88px;top:1753.66px;font-size:27.8px;color:#181d1f;font-weight:400;letter-spacing:-0.063px;">1289.904</div>
<div class="t" style="left:2097.76px;top:1753.66px;font-size:27.8px;color:#181d1f;font-weight:400;letter-spacing:1.096px;">-102.8320000000...</div>
<div class="t" style="left:2436.88px;top:1753.66px;font-size:27.8px;color:#181d1f;font-weight:400;letter-spacing:-0.012px;">1605.465</div>
<div class="t" style="left:2776.88px;top:1753.66px;font-size:27.8px;color:#181d1f;font-weight:400;letter-spacing:-0.343px;">1429.501817524271</div>
<div class="r" style="left:1042px;top:1784px;width:2040px;height:2px;background:#dde2eb"></div>
<div class="r" style="left:3168px;top:666px;width:8px;height:46px;background:#c1c1c1"></div>
<div class="r" style="left:3176px;top:504px;width:2px;height:1304px;background:#babfc7"></div>
<div class="r" style="left:3178px;top:504px;width:498px;height:1304px;background:#f8f8f8"></div>
<div class="r" style="left:3676px;top:504px;width:2px;height:1304px;background:#babfc7"></div>
<div class="r" style="left:3202px;top:534px;width:56px;height:36px;border-radius:18px;background:#999999"></div>
<div class="r" style="left:3202px;top:534px;width:36px;height:36px;border-radius:50%;background:#fff;border:2px solid #999999"></div>
<div class="t" style="left:3269.04px;top:552.57px;font-size:27.5px;color:#181d1f;font-weight:400;letter-spacing:0.490px;">Pivot Mode</div>
<div class="r" style="left:3178px;top:600px;width:498px;height:2px;background:#dde2eb"></div>
<svg class="r" style="left:3202px;top:633px;" width="32" height="32" viewBox="0 0 32 32"><rect x="0" y="0" width="32" height="32" rx="3.5" fill="#2196f3"/><path d="M5.5 15.5 L13 23 L27 8.5" stroke="#fff" stroke-width="3.6" fill="none"/></svg>
<div class="r" style="left:3258px;top:625px;width:394px;height:48px;border:2px solid #babfc7;border-radius:6px;background:#fff"></div>
<div class="t" style="left:3272.05px;top:649.47px;font-size:27.5px;color:#7d8186;font-weight:400;letter-spacing:0.238px;">Search...</div>
<div class="r" style="left:3178px;top:696px;width:498px;height:2px;background:#dde2eb"></div>
<svg class="r" style="left:3202px;top:718px;" width="32" height="32" viewBox="0 0 32 32"><rect x="0" y="0" width="32" height="32" rx="3.5" fill="#2196f3"/><path d="M5.5 15.5 L13 23 L27 8.5" stroke="#fff" stroke-width="3.6" fill="none"/></svg>
<svg class="r" style="left:3264px;top:726px;" width="21" height="16" viewBox="0 0 21 16"><rect x="0" y="0" width="2.2" height="3.8" fill="#181d1f"/><rect x="0" y="6" width="2.2" height="3.8" fill="#181d1f"/><rect x="0" y="12" width="2.2" height="3.8" fill="#181d1f"/><rect x="6" y="0" width="2.2" height="3.8" fill="#181d1f"/><rect x="6" y="6" width="2.2" height="3.8" fill="#181d1f"/><rect x="6" y="12" width="2.2" height="3.8" fill="#181d1f"/><rect x="12" y="0" width="2.2" height="3.8" fill="#181d1f"/><rect x="12" y="6" width="2.2" height="3.8" fill="#181d1f"/><rect x="12" y="12" width="2.2" height="3.8" fill="#181d1f"/><rect x="18" y="0" width="2.2" height="3.8" fill="#181d1f"/><rect x="18" y="6" width="2.2" height="3.8" fill="#181d1f"/><rect x="18" y="12" width="2.2" height="3.8" fill="#181d1f"/></svg>
<div class="t" style="left:3313.34px;top:734.57px;font-size:27.5px;color:#181d1f;font-weight:400;letter-spacing:0.038px;">Experiment Key</div>
<svg class="r" style="left:3202px;top:766px;" width="32" height="32" viewBox="0 0 32 32"><rect x="0" y="0" width="32" height="32" rx="3.5" fill="#2196f3"/><path d="M5.5 15.5 L13 23 L27 8.5" stroke="#fff" stroke-width="3.6" fill="none"/></svg>
<svg class="r" style="left:3264px;top:774px;" width="21" height="16" viewBox="0 0 21 16"><rect x="0" y="0" width="2.2" height="3.8" fill="#181d1f"/><rect x="0" y="6" width="2.2" height="3.8" fill="#181d1f"/><rect x="0" y="12" width="2.2" height="3.8" fill="#181d1f"/><rect x="6" y="0" width="2.2" height="3.8" fill="#181d1f"/><rect x="6" y="6" width="2.2" height="3.8" fill="#181d1f"/><rect x="6" y="12" width="2.2" height="3.8" fill="#181d1f"/><rect x="12" y="0" width="2.2" height="3.8" fill="#181d1f"/><rect x="12" y="6" width="2.2" height="3.8" fill="#181d1f"/><rect x="12" y="12" width="2.2" height="3.8" fill="#181d1f"/><rect x="18" y="0" width="2.2" height="3.8" fill="#181d1f"/><rect x="18" y="6" width="2.2" height="3.8" fill="#181d1f"/><rect x="18" y="12" width="2.2" height="3.8" fill="#181d1f"/></svg>
<div class="t" style="left:3313.34px;top:782.57px;font-size:27.5px;color:#181d1f;font-weight:400;letter-spacing:0.330px;">Date</div>
<svg class="r" style="left:3202px;top:814px;" width="32" height="32" viewBox="0 0 32 32"><rect x="0" y="0" width="32" height="32" rx="3.5" fill="#2196f3"/><path d="M5.5 15.5 L13 23 L27 8.5" stroke="#fff" stroke-width="3.6" fill="none"/></svg>
<svg class="r" style="left:3264px;top:822px;" width="21" height="16" viewBox="0 0 21 16"><rect x="0" y="0" width="2.2" height="3.8" fill="#181d1f"/><rect x="0" y="6" width="2.2" height="3.8" fill="#181d1f"/><rect x="0" y="12" width="2.2" height="3.8" fill="#181d1f"/><rect x="6" y="0" width="2.2" height="3.8" fill="#181d1f"/><rect x="6" y="6" width="2.2" height="3.8" fill="#181d1f"/><rect x="6" y="12" width="2.2" height="3.8" fill="#181d1f"/><rect x="12" y="0" width="2.2" height="3.8" fill="#181d1f"/><rect x="12" y="6" width="2.2" height="3.8" fill="#181d1f"/><rect x="12" y="12" width="2.2" height="3.8" fill="#181d1f"/><rect x="18" y="0" width="2.2" height="3.8" fill="#181d1f"/><rect x="18" y="6" width="2.2" height="3.8" fill="#181d1f"/><rect x="18" y="12" width="2.2" height="3.8" fill="#181d1f"/></svg>
<div class="t" style="left:3315.00px;top:830.57px;font-size:27.5px;color:#181d1f;font-weight:400;letter-spacing:-0.232px;">Yesterday</div>
<svg class="r" style="left:3202px;top:862px;" width="32" height="32" viewBox="0 0 32 32"><rect x="0" y="0" width="32" height="32" rx="3.5" fill="#2196f3"/><path d="M5.5 15.5 L13 23 L27 8.5" stroke="#fff" stroke-width="3.6" fill="none"/></svg>
<svg class="r" style="left:3264px;top:870px;" width="21" height="16" viewBox="0 0 21 16"><rect x="0" y="0" width="2.2" height="3.8" fill="#181d1f"/><rect x="0" y="6" width="2.2" height="3.8" fill="#181d1f"/><rect x="0" y="12" width="2.2" height="3.8" fill="#181d1f"/><rect x="6" y="0" width="2.2" height="3.8" fill="#181d1f"/><rect x="6" y="6" width="2.2" height="3.8" fill="#181d1f"/><rect x="6" y="12" width="2.2" height="3.8" fill="#181d1f"/><rect x="12" y="0" width="2.2" height="3.8" fill="#181d1f"/><rect x="12" y="6" width="2.2" height="3.8" fill="#181d1f"/><rect x="12" y="12" width="2.2" height="3.8" fill="#181d1f"/><rect x="18" y="0" width="2.2" height="3.8" fill="#181d1f"/><rect x="18" y="6" width="2.2" height="3.8" fill="#181d1f"/><rect x="18" y="12" width="2.2" height="3.8" fill="#181d1f"/></svg>
<div class="t" style="left:3315.00px;top:878.57px;font-size:27.5px;color:#181d1f;font-weight:400;letter-spacing:0.054px;">Yesterday_Diff</div>
<svg class="r" style="left:3202px;top:910px;" width="32" height="32" viewBox="0 0 32 32"><rect x="0" y="0" width="32" height="32" rx="3.5" fill="#2196f3"/><path d="M5.5 15.5 L13 23 L27 8.5" stroke="#fff" stroke-width="3.6" fill="none"/></svg>
<svg class="r" style="left:3264px;top:918px;" width="21" height="16" viewBox="0 0 21 16"><rect x="0" y="0" width="2.2" height="3.8" fill="#181d1f"/><rect x="0" y="6" width="2.2" height="3.8" fill="#181d1f"/><rect x="0" y="12" width="2.2" height="3.8" fill="#181d1f"/><rect x="6" y="0" width="2.2" height="3.8" fill="#181d1f"/><rect x="6" y="6" width="2.2" height="3.8" fill="#181d1f"/><rect x="6" y="12" width="2.2" height="3.8" fill="#181d1f"/><rect x="12" y="0" width="2.2" height="3.8" fill="#181d1f"/><rect x="12" y="6" width="2.2" height="3.8" fill="#181d1f"/><rect x="12" y="12" width="2.2" height="3.8" fill="#181d1f"/><rect x="18" y="0" width="2.2" height="3.8" fill="#181d1f"/><rect x="18" y="6" width="2.2" height="3.8" fill="#181d1f"/><rect x="18" y="12" width="2.2" height="3.8" fill="#181d1f"/></svg>
<div class="t" style="left:3314.22px;top:926.57px;font-size:27.5px;color:#181d1f;font-weight:400;letter-spacing:0.170px;">Ground_Truth</div>
<svg class="r" style="left:3202px;top:958px;" width="32" height="32" viewBox="0 0 32 32"><rect x="0" y="0" width="32" height="32" rx="3.5" fill="#2196f3"/><path d="M5.5 15.5 L13 23 L27 8.5" stroke="#fff" stroke-width="3.6" fill="none"/></svg>
<svg class="r" style="left:3264px;top:966px;" width="21" height="16" viewBox="0 0 21 16"><rect x="0" y="0" width="2.2" height="3.8" fill="#181d1f"/><rect x="0" y="6" width="2.2" height="3.8" fill="#181d1f"/><rect x="0" y="12" width="2.2" height="3.8" fill="#181d1f"/><rect x="6" y="0" width="2.2" height="3.8" fill="#181d1f"/><rect x="6" y="6" width="2.2" height="3.8" fill="#181d1f"/><rect x="6" y="12" width="2.2" height="3.8" fill="#181d1f"/><rect x="12" y="0" width="2.2" height="3.8" fill="#181d1f"/><rect x="12" y="6" width="2.2" height="3.8" fill="#181d1f"/><rect x="12" y="12" width="2.2" height="3.8" fill="#181d1f"/><rect x="18" y="0" width="2.2" height="3.8" fill="#181d1f"/><rect x="18" y="6" width="2.2" height="3.8" fill="#181d1f"/><rect x="18" y="12" width="2.2" height="3.8" fill="#181d1f"/></svg>
<div class="t" style="left:3313.34px;top:974.57px;font-size:27.5px;color:#181d1f;font-weight:400;letter-spacing:0.762px;">Prediction</div>
<div class="r" style="left:3178px;top:1323px;width:498px;height:2px;background:#dde2eb"></div>
<svg class="r" style="left:3214px;top:1353px;" width="30" height="24" viewBox="0 0 30 24"><rect x="2" y="2" width="4" height="2" fill="#181d1f"/><rect x="10" y="2" width="18" height="2" fill="#181d1f"/><rect x="10" y="8" width="4" height="2" fill="#181d1f"/><rect x="18" y="8" width="10" height="2" fill="#181d1f"/><rect x="10" y="14" width="4" height="2" fill="#181d1f"/><rect x="18" y="14" width="10" height="2" fill="#181d1f"/><rect x="10" y="20" width="4" height="2" fill="#181d1f"/><rect x="18" y="20" width="10" height="2" fill="#181d1f"/></svg>
<div class="t" style="left:3257.04px;top:1365.47px;font-size:27.5px;color:#181d1f;font-weight:400;letter-spacing:-0.076px;">Row Groups</div>
<svg class="r" style="left:3202px;top:1405px;" width="450" height="137" viewBox="0 0 450 137"><rect x="1" y="1" width="448" height="135" fill="none" stroke="#c5cad3" stroke-width="2" stroke-dasharray="6 4"/></svg>
<div class="t" style="left:3227.04px;top:1473.47px;font-size:27.5px;color:#5f6368;font-weight:400;letter-spacing:0.476px;">Drag here to set row groups</div>
<div class="r" style="left:3178px;top:1566px;width:498px;height:2px;background:#dde2eb"></div>
<div class="t" style="left:3220.25px;top:1608.77px;font-size:27.5px;color:#181d1f;font-weight:400;letter-spacing:0.000px;">Σ</div>
<div class="t" style="left:3258.88px;top:1608.77px;font-size:27.5px;color:#181d1f;font-weight:400;letter-spacing:-0.434px;">Values</div>
<svg class="r" style="left:3202px;top:1648px;" width="450" height="136" viewBox="0 0 450 136"><rect x="1" y="1" width="448" height="134" fill="none" stroke="#c5cad3" stroke-width="2" stroke-dasharray="6 4"/></svg>
<div class="t" style="left:3226.74px;top:1716.47px;font-size:27.5px;color:#5f6368;font-weight:400;letter-spacing:0.444px;">Drag here to aggregate</div>
<div class="r" style="left:3678px;top:552px;width:4px;height:216px;background:#2196f3"></div>
<svg class="r" style="left:3700px;top:592px;" width="20" height="18" viewBox="0 0 20 18"><rect x="0" y="0" width="20" height="18" fill="#181d1f"/><rect x="2" y="3.6" width="4" height="12.4" fill="#fff"/><rect x="7.8" y="3.6" width="4.1" height="12.4" fill="#fff"/><rect x="13.8" y="3.6" width="4.2" height="12.4" fill="#fff"/></svg>
<div class="r" style="left:3695px;top:624px;font-size:27.5px;line-height:27.5px;color:#181d1f;writing-mode:vertical-rl;white-space:pre;letter-spacing:0.3px">Columns</div>
<div class="r" style="left:1040px;top:1808px;width:2700px;height:72px;border:2px solid #dde2eb;border-top:none;background:#fff"></div>
<div class="r" style="left:1040px;top:1808px;width:2700px;height:2px;background:#babfc7"></div>
<div class="t" style="left:1082.28px;top:1842.77px;font-size:27.5px;color:#181d1f;font-weight:400;letter-spacing:-1.105px;">Total rows:</div>
<div class="t" style="left:1210.98px;top:1842.77px;font-size:27.5px;color:#181d1f;font-weight:700;letter-spacing:-1.819px;">400</div>
<div class="r" style="left:1274px;top:1836px;width:2px;height:18px;background:#181d1f"></div>
<div class="r" style="left:1282px;top:1836px;width:2px;height:18px;background:#181d1f"></div>
<div class="t" style="left:1304.68px;top:1842.77px;font-size:27.5px;color:#181d1f;font-weight:400;letter-spacing:-0.973px;">Total tables:</div>
<div class="t" style="left:1447.78px;top:1842.77px;font-size:27.5px;color:#181d1f;font-weight:700;letter-spacing:0.000px;">4</div>
<div class="r" style="left:60px;top:1924px;width:3720px;height:16px;background:linear-gradient(180deg,rgba(0,0,0,0) 0,rgba(0,0,0,0.065) 100%)"></div>
<svg class="r" style="left:146px;top:2008px;" width="20" height="24" viewBox="0 0 20 24"><path d="M15 3 L6 12 L15 21" stroke="#5155f5" stroke-width="3" fill="none" stroke-linecap="round" stroke-linejoin="round"/></svg>
<div class="t" style="left:182.09px;top:2019.22px;font-size:28.2px;color:#5155f5;font-weight:400;letter-spacing:0.526px;">Back</div>
<div class="t" style="left:3428.59px;top:2019.22px;font-size:28.2px;color:#5155f5;font-weight:400;letter-spacing:-0.162px;">Reset</div>
<div class="r" style="left:3557px;top:1984px;width:163px;height:72px;border-radius:7px;background:#5356f6"></div>
<div class="t" style="left:3604.09px;top:2019.22px;font-size:28.2px;color:#ffffff;font-weight:400;letter-spacing:0.117px;">Done</div>
</div></body></html>
